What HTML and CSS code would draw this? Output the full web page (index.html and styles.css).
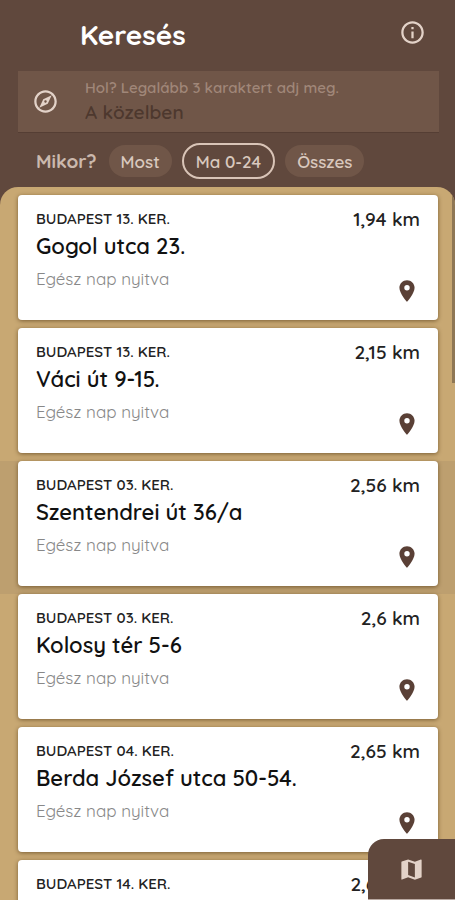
FILE: index.html
```html
<!DOCTYPE html>
<html lang="hu">

<head>
    <meta charset="UTF-8">
    <meta name="viewport" content="width=device-width, initial-scale=1.0">
    <title>Keresés</title>
    <link rel="stylesheet" href="styles.css">
</head>

<body>
    <!-- Shared icons -->
    <svg class="icon-defs" aria-hidden="true">
        <symbol id="pin" viewBox="0 0 24 24">
            <path d="M12 2C8.130 2 5 5.130 5 9c0 5.250 7 13 7 13s7-7.750 7-13c0-3.870-3.130-7-7-7zm0 9.500a2.500 2.500 0 0 1 0-5 2.500 2.500 0 0 1 0 5z" />
        </symbol>
    </svg>

    <header class="header">
        <div class="title-bar">
            <h1>Keresés</h1>
            <button type="button" class="icon-button" aria-label="Információ">
                <svg class="icon" viewBox="0 0 24 24">
                    <path d="M11 7h2v2h-2zm0 4h2v6h-2zm1-9C6.480 2 2 6.480 2 12s4.480 10 10 10 10-4.480 10-10S17.520 2 12 2zm0 18c-4.410 0-8-3.590-8-8s3.590-8 8-8 8 3.590 8 8-3.590 8-8 8z" />
                </svg>
            </button>
        </div>
        <div class="search">
            <svg class="icon" viewBox="0 0 24 24">
                <path d="M12 2C6.480 2 2 6.480 2 12s4.480 10 10 10 10-4.480 10-10S17.520 2 12 2zm0 18c-4.410 0-8-3.590-8-8s3.590-8 8-8 8 3.590 8 8-3.590 8-8 8zM6.500 17.500l7.510-3.490L17.500 6.500 9.990 9.990 6.500 17.500zm5.500-6.600c.61 0 1.100.49 1.100 1.100s-.49 1.100-1.100 1.100-1.100-.49-1.100-1.100.49-1.100 1.100-1.100z" />
            </svg>
            <div class="search-field">
                <label for="place">Hol? Legalább 3 karaktert adj meg.</label>
                <input type="text" id="place" placeholder="A közelben">
            </div>
        </div>
        <div class="filters">
            <span class="filters-label">Mikor?</span>
            <button type="button" class="chip">Most</button>
            <button type="button" class="chip chip-selected">Ma 0-24</button>
            <button type="button" class="chip">Összes</button>
        </div>
    </header>

    <main class="results">
        <ul class="result-list">
            <li class="row">
                <article class="card">
                    <div class="card-info">
                        <p class="district">BUDAPEST 13. KER.</p>
                        <h2>Gogol utca 23.</h2>
                        <p class="hours">Egész nap nyitva</p>
                    </div>
                    <div class="card-side">
                        <span class="distance">1,94 km</span>
                        <svg class="pin"><use href="#pin" /></svg>
                    </div>
                </article>
            </li>
            <li class="row">
                <article class="card">
                    <div class="card-info">
                        <p class="district">BUDAPEST 13. KER.</p>
                        <h2>Váci út 9-15.</h2>
                        <p class="hours">Egész nap nyitva</p>
                    </div>
                    <div class="card-side">
                        <span class="distance">2,15 km</span>
                        <svg class="pin"><use href="#pin" /></svg>
                    </div>
                </article>
            </li>
            <li class="row row-active">
                <article class="card">
                    <div class="card-info">
                        <p class="district">BUDAPEST 03. KER.</p>
                        <h2>Szentendrei út 36/a</h2>
                        <p class="hours">Egész nap nyitva</p>
                    </div>
                    <div class="card-side">
                        <span class="distance">2,56 km</span>
                        <svg class="pin"><use href="#pin" /></svg>
                    </div>
                </article>
            </li>
            <li class="row">
                <article class="card">
                    <div class="card-info">
                        <p class="district">BUDAPEST 03. KER.</p>
                        <h2>Kolosy tér 5-6</h2>
                        <p class="hours">Egész nap nyitva</p>
                    </div>
                    <div class="card-side">
                        <span class="distance">2,6 km</span>
                        <svg class="pin"><use href="#pin" /></svg>
                    </div>
                </article>
            </li>
            <li class="row">
                <article class="card">
                    <div class="card-info">
                        <p class="district">BUDAPEST 04. KER.</p>
                        <h2>Berda József utca 50-54.</h2>
                        <p class="hours">Egész nap nyitva</p>
                    </div>
                    <div class="card-side">
                        <span class="distance">2,65 km</span>
                        <svg class="pin"><use href="#pin" /></svg>
                    </div>
                </article>
            </li>
            <li class="row">
                <article class="card">
                    <div class="card-info">
                        <p class="district">BUDAPEST 14. KER.</p>
                    </div>
                    <div class="card-side">
                        <span class="distance">2,66 km</span>
                    </div>
                </article>
            </li>
        </ul>
        <div class="scroll-thumb"></div>
    </main>

    <button type="button" class="map-button" aria-label="Térkép">
        <svg class="icon" viewBox="0 0 24 24">
            <path d="M20.500 3l-.16.030L15 5.100 9 3 3.360 4.900c-.21.070-.36.250-.36.480V20.500c0 .28.220.5.500.5l.16-.03L9 18.900l6 2.100 5.640-1.900c.21-.07.36-.25.36-.48V3.500c0-.28-.22-.5-.5-.5zM15 19l-6-2.110V5l6 2.110V19z" />
        </svg>
    </button>
</body>

</html>
```
FILE: styles.css
```css
* {
    box-sizing: border-box;
}

body {
    margin: 0;
    height: 100vh;
    display: flex;
    flex-direction: column;
    overflow: hidden;
    background-color: #60483d;
    font-family: Quicksand, Inter, sans-serif;
}

h1,
h2,
p {
    margin: 0;
}

button,
input {
    font-family: inherit;
}

.icon-defs {
    display: none;
}

.icon {
    width: 27px;
    height: 27px;
    fill: #e3d2c8;
    flex-shrink: 0;
}

/* Header */
.header {
    padding: 8px 16px 8px 18px;
}

.title-bar {
    display: flex;
    align-items: center;
    justify-content: space-between;
    height: 54px;
    margin-bottom: 9px;
    padding: 0 7px 0 62px;
}

.title-bar h1 {
    color: #fff;
    font-size: 28px;
    font-weight: 700;
    line-height: 32px;
}

.icon-button {
    display: flex;
    padding: 0 6px 6px 6px;
    border: none;
    background: none;
}

.search {
    display: flex;
    align-items: center;
    gap: 26px;
    height: 62px;
    padding: 0 14px;
    background-color: #705648;
    border-bottom: 1px solid #553e34;
}

.search-field {
    flex: 1;
}

.search-field label {
    display: block;
    color: #a08779;
    font-size: 15px;
    font-weight: 600;
    line-height: 20px;
}

.search-field input {
    display: block;
    width: 100%;
    height: 28px;
    padding: 0;
    border: none;
    outline: none;
    background: none;
    font-size: 19px;
    font-weight: 600;
}

.search-field input::placeholder {
    color: #4d382e;
}

.filters {
    display: flex;
    align-items: center;
    gap: 10px;
    height: 36px;
    margin-top: 10px;
    padding-left: 18px;
}

.filters-label {
    margin-right: 2px;
    color: #cbb8ad;
    font-size: 19px;
    font-weight: 700;
}

.chip {
    height: 32px;
    padding: 0 12px;
    border: none;
    border-radius: 18px;
    background-color: #705648;
    color: #d9c8be;
    font-size: 17px;
    font-weight: 600;
}

.chip-selected {
    height: 36px;
    border: 2px solid #d9c4b7;
    background: none;
}

/* Results */
.results {
    position: relative;
    flex: 1;
    min-height: 0;
    padding-top: 8px;
    overflow: hidden;
    background-color: #c8a873;
    border-radius: 18px 18px 0 0;
}

.result-list {
    margin: 0;
    padding: 0;
    list-style: none;
}

.row {
    padding: 0 17px 8px 18px;
}

.row-active {
    background-color: #bd9f6f;
}

.card {
    display: flex;
    justify-content: space-between;
    height: 125px;
    padding: 14px 18px 16px;
    background-color: #fff;
    border-radius: 4px;
    box-shadow: 0 1px 4px rgba(70, 45, 10, 0.6);
}

.district {
    color: #222;
    font-size: 15px;
    font-weight: 600;
    line-height: 20px;
}

.card h2 {
    color: #111;
    font-size: 22px;
    font-weight: 600;
    line-height: 34px;
}

.hours {
    color: #888;
    font-size: 17px;
    font-weight: 400;
    line-height: 32px;
}

.card-side {
    display: flex;
    flex-direction: column;
    justify-content: space-between;
    align-items: flex-end;
}

.distance {
    color: #222;
    font-size: 19px;
    font-weight: 600;
    line-height: 20px;
}

.pin {
    width: 26px;
    height: 26px;
    fill: #5a4036;
}

/* Lies over the right edge of the list */
.scroll-thumb {
    position: absolute;
    top: 0;
    right: 0;
    width: 3px;
    height: 196px;
    background-color: #8f7755;
}

/* Map button in the corner */
.map-button {
    position: fixed;
    right: 0;
    bottom: 0;
    display: flex;
    align-items: center;
    justify-content: center;
    width: 87px;
    height: 61px;
    padding: 0;
    border: none;
    border-bottom: 1px solid #b9a9a2;
    border-radius: 16px 0 0 0;
    background-color: #60483d;
}
```
